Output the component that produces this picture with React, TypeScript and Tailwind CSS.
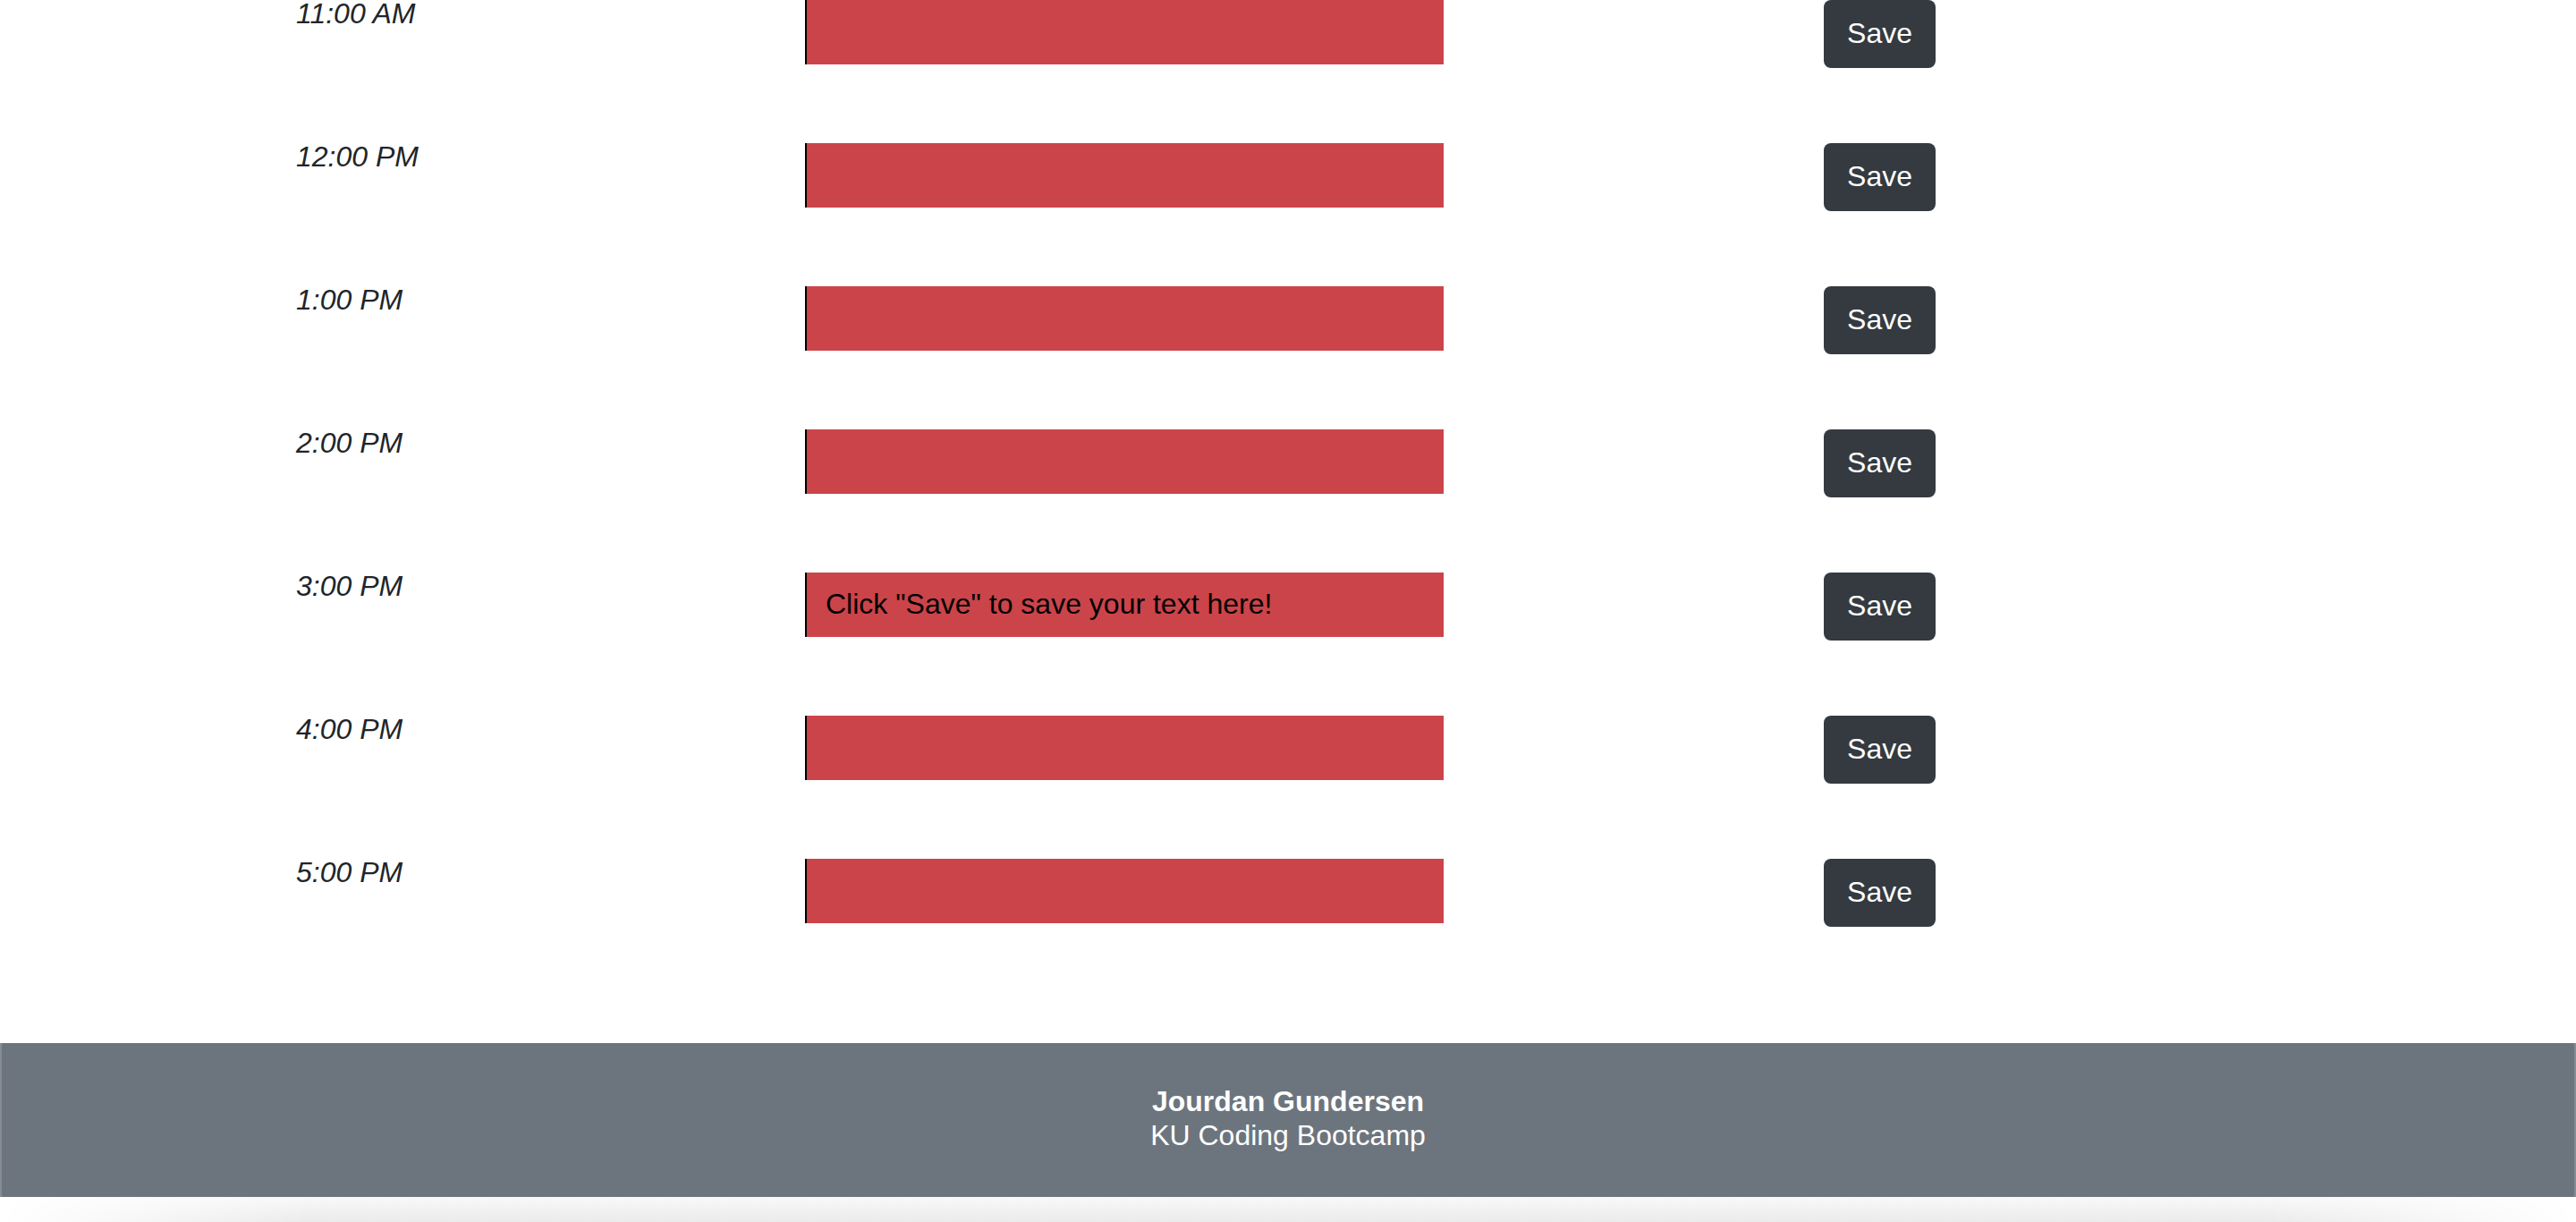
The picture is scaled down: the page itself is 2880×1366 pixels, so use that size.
import React from "react";

const hours = ["11:00 AM", "12:00 PM", "1:00 PM", "2:00 PM", "3:00 PM", "4:00 PM", "5:00 PM"];

function Row({ label, text }: { label: string; text?: string }) {
  return (
    <div className="flex h-[160px] items-start">
      <div className="w-[600px] pl-[31px] text-[32px] italic leading-[30px] text-[#212529]">{label}</div>
      <div className="flex h-[72px] w-[714px] items-center border-l-2 border-black bg-[#cb444a] pl-[21px] pb-[2px] text-[32px] leading-[38px] text-black">
        {text}
      </div>
      <div className="w-[425px]" />
      <button className="h-[76px] w-[125px] rounded-[8px] bg-[#343a40] pb-[2px] text-[32px] leading-[38px] text-white">
        Save
      </button>
    </div>
  );
}

export default function App() {
  return (
    <div className="min-h-[1366px] bg-white font-['Liberation_Sans',Arial,sans-serif]">
      <div className="pl-[300px]">
        {hours.map((h) => (
          <Row key={h} label={h} text={h === "3:00 PM" ? 'Click "Save" to save your text here!' : undefined} />
        ))}
      </div>
      <div className="h-[46px]" />
      <footer className="h-[172px] border-x-2 border-[#868b93] bg-[#6c757d] pt-[46px] text-center text-[32px] leading-[38px] text-white">
        <div className="font-bold">Jourdan Gundersen</div>
        <div>KU Coding Bootcamp</div>
      </footer>
      <div className="h-[28px] bg-[linear-gradient(to_bottom,#f9f8fa,#ebebeb)] [mask-image:linear-gradient(to_right,transparent,black_12%,black_88%,transparent)]" />
    </div>
  );
}
